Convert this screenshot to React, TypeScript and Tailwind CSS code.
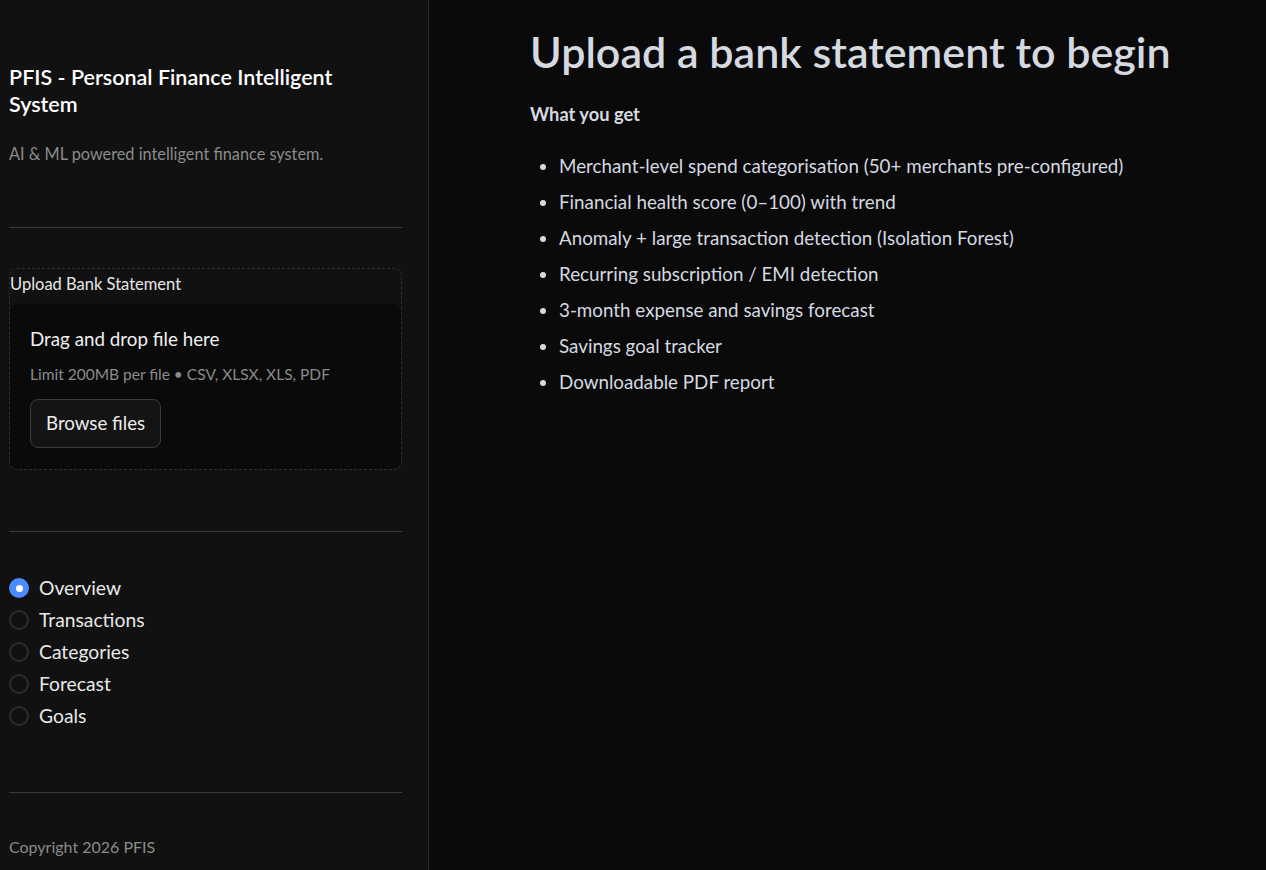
import React from "react";

const features = [
  "Merchant-level spend categorisation (50+ merchants pre-configured)",
  "Financial health score (0–100) with trend",
  "Anomaly + large transaction detection (Isolation Forest)",
  "Recurring subscription / EMI detection",
  "3-month expense and savings forecast",
  "Savings goal tracker",
  "Downloadable PDF report",
];

const pages = ["Overview", "Transactions", "Categories", "Forecast", "Goals"];

const Sidebar = () => {
  return (
    <aside className="w-[429px] shrink-0 h-[870px] bg-[#111111] border-r border-[#2c2c2c] pl-[9px] pr-[26px] flex flex-col">
      <h2 className="mt-[64px] max-w-[345px] text-[21.5px] leading-[27px] font-semibold text-white">
        PFIS - Personal Finance Intelligent System
      </h2>
      <p className="mt-[24px] text-[16.3px] leading-[24px] text-[#8b8b8b]">
        AI &amp; ML powered intelligent finance system.
      </p>
      <hr className="mt-[61px] border-0 border-t border-[#3a3a3a]" />

      {/* uploader */}
      <div className="mt-[40px] border border-dashed border-[#2e2e2e] rounded-lg h-[202px] flex flex-col">
        <div className="text-[16.5px] leading-[20px] text-[#e6e6e6] pt-[5px] pb-[10px]">
          Upload Bank Statement
        </div>
        <div className="flex-1 bg-[#0a0a0a] rounded-lg px-[20px] pt-[22px]">
          <div className="text-[18.8px] leading-[26px] text-[#f0f0f0]">Drag and drop file here</div>
          <div className="mt-[12px] text-[15.5px] leading-[20px] text-[#8b8b8b]">
            Limit 200MB per file • CSV, XLSX, XLS, PDF
          </div>
          <button className="mt-[15px] h-[49px] px-[15px] rounded-lg border border-[#3b3b3b] bg-[#141414] text-[18.7px] text-[#ececec]">
            Browse files
          </button>
        </div>
      </div>

      <hr className="mt-[61px] border-0 border-t border-[#3a3a3a]" />

      {/* page radios */}
      <div className="mt-[43px] flex flex-col gap-[6px]">
        {pages.map((p, i) => (
          <label key={p} className="flex items-center gap-[10px] h-[26px]">
            {i === 0 ? (
              <span className="w-[20px] h-[20px] rounded-full bg-[#4a8cff] flex items-center justify-center">
                <span className="w-[7px] h-[7px] rounded-full bg-white" />
              </span>
            ) : (
              <span className="w-[20px] h-[20px] rounded-full border-2 border-[#2e2e2e]" />
            )}
            <span className="text-[19.3px] text-[#e8e8e8]">{p}</span>
          </label>
        ))}
      </div>

      <hr className="mt-[63px] border-0 border-t border-[#3a3a3a]" />
      <div className="mt-[42px] text-[16px] leading-[24px] text-[#8b8b8b]">Copyright 2026 PFIS</div>
    </aside>
  );
};

export default function App() {
  return (
    <div
      className="flex w-[1266px] h-[870px] overflow-hidden bg-[#0a0a0a]"
      style={{ fontFamily: "Lato, 'Noto Sans', sans-serif" }}
    >
      <Sidebar />
      <main className="flex-1 pl-[101px] pt-[24px] text-[#d5d9e0]">
        <h1 className="text-[43px] leading-[56px] font-semibold">Upload a bank statement to begin</h1>
        <p className="mt-[21px] text-[18.3px] font-bold">What you get</p>
        <ul className="mt-[20px] list-disc pl-[29px] text-[18.8px]">
          {features.map((f) => (
            <li key={f} className="h-[36px] leading-[36px] marker:text-[#d5d9e0]">
              {f}
            </li>
          ))}
        </ul>
      </main>
    </div>
  );
}
